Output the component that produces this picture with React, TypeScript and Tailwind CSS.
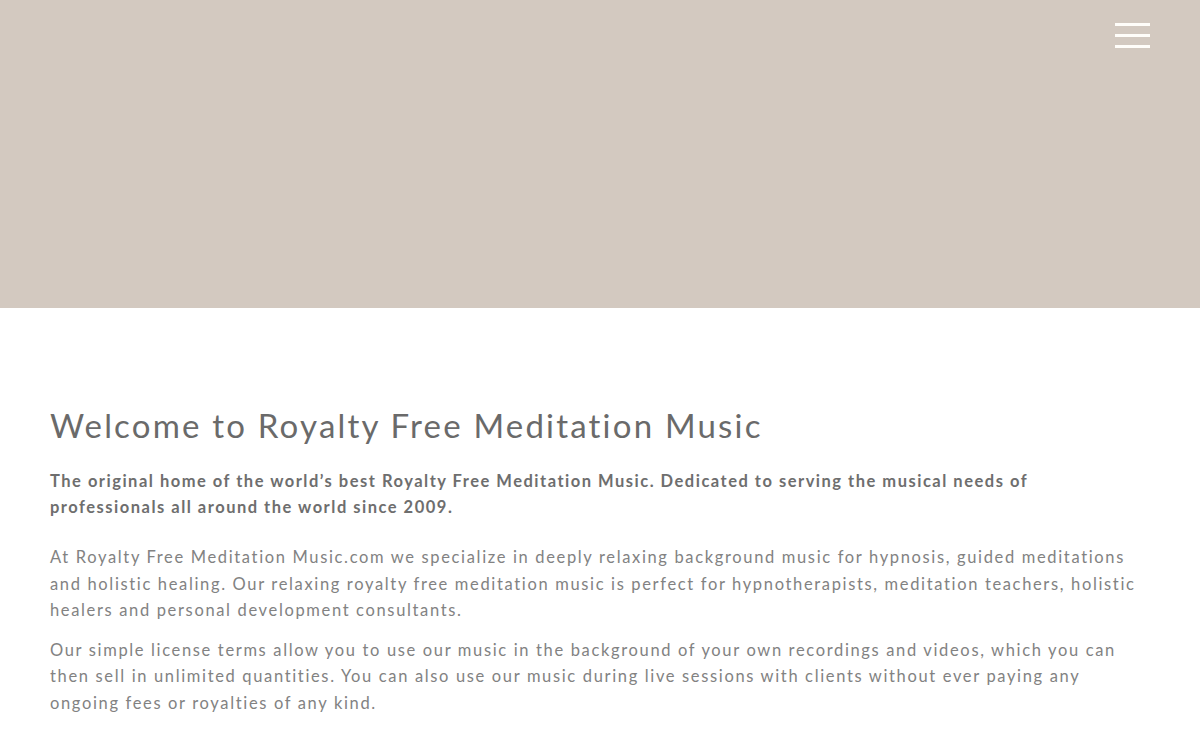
import React from "react";

export default function App() {
  return (
    <div className="min-h-screen bg-white" style={{ fontFamily: "Lato, 'Open Sans', sans-serif" }}>
      <header className="h-[308px] bg-[#d3c9c0] flex justify-end pt-[23px] pr-[50px]">
        <button className="w-[35px] h-[25px] flex flex-col justify-between" aria-label="menu">
          <span className="block h-[3px] w-full bg-[#fffdf9]" />
          <span className="block h-[3px] w-full bg-[#fffdf9]" />
          <span className="block h-[3px] w-full bg-[#fffdf9]" />
        </button>
      </header>
      <main className="px-[50px] pt-[97px]">
        <h1 className="text-[33px] leading-[40px] tracking-[2.2px] text-[#6a6a6a] font-normal">
          Welcome to Royalty Free Meditation Music
        </h1>
        <p className="mt-[23px] max-w-[1040px] text-[16.5px] leading-[26px] tracking-[1.5px] font-bold text-[#6e6e6e]">
          The original home of the world’s best Royalty Free Meditation Music. Dedicated to serving the musical needs of professionals all around the world since 2009.
        </p>
        <p className="mt-[24px] text-[16.5px] leading-[26.5px] tracking-[1.65px] text-[#828282]">
          At Royalty Free Meditation Music.com we specialize in deeply relaxing background music for hypnosis, guided meditations and holistic healing. Our relaxing royalty free meditation music is perfect for hypnotherapists, meditation teachers, holistic healers and personal development consultants.
        </p>
        <p className="mt-[13px] text-[16.5px] leading-[26.5px] tracking-[1.65px] text-[#828282]">
          Our simple license terms allow you to use our music in the background of your own recordings and videos, which you can then sell in unlimited quantities. You can also use our music during live sessions with clients without ever paying any ongoing fees or royalties of any kind.
        </p>
      </main>
    </div>
  );
}
